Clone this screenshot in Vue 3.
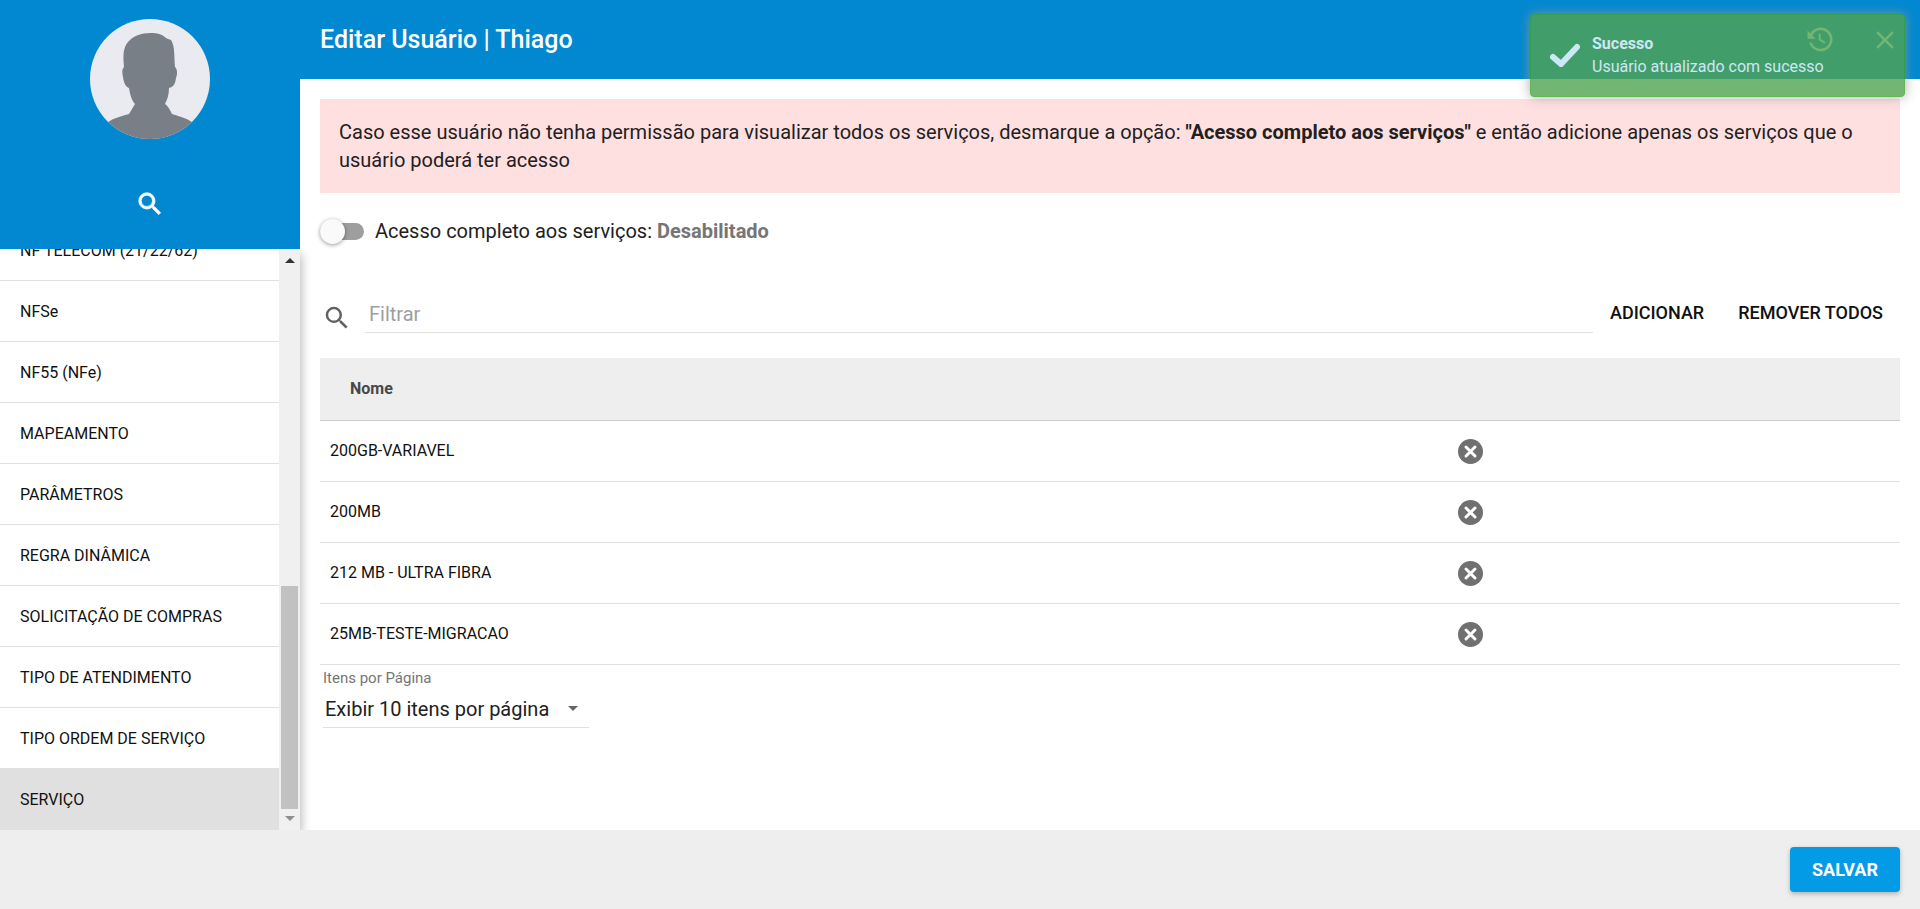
<script setup>
import { ref } from 'vue';

const menuItems = ref([
	'NF TELECOM (21/22/62)',
	'NFSe',
	'NF55 (NFe)',
	'MAPEAMENTO',
	'PARÂMETROS',
	'REGRA DINÂMICA',
	'SOLICITAÇÃO DE COMPRAS',
	'TIPO DE ATENDIMENTO',
	'TIPO ORDEM DE SERVIÇO',
	'SERVIÇO',
]);
const activeItem = ref('SERVIÇO');

const fullAccess = ref(false);
const filter = ref('');
const perPage = ref(10);
const showToast = ref(true);

const services = ref([
	'200GB-VARIAVEL',
	'200MB',
	'212 MB - ULTRA FIBRA',
	'25MB-TESTE-MIGRACAO',
]);

const filteredServices = () => {
	return services.value.filter((service) =>
		service.toLowerCase().includes(filter.value.toLowerCase())
	);
};

const removeService = (name) => {
	services.value = services.value.filter((service) => service !== name);
};
</script>

<template>
	<div class="page">
		<div class="body">
			<aside class="sidebar">
				<div class="profile">
					<svg class="avatar" viewBox="0 0 120 120" role="img" aria-label="Foto do usuário">
						<defs>
							<clipPath id="avatar-clip"><circle cx="60" cy="60" r="60" /></clipPath>
						</defs>
						<g clip-path="url(#avatar-clip)">
							<rect width="120" height="120" fill="#e9ebf0" />
							<path
								fill="#787f87"
								d="M61 14C51 14 43 17 38 23C33 29 33 36 34 48C32 50 32 53 33 58C34 65 36 68 39 69C40 76 42 82 45 85C43 88 41 92 39 95C32 97 24 99 18 103L10 120H110L102 103C96 99 88 97 82 95C80 91 78 87 75 85C77 81 79 76 79 69C83 68 85 66 86 59C88 54 87 50 85 48C84 36 85 27 81 21C79 20 77 20 76 19C72 15 67 14 61 14Z"
							/>
						</g>
					</svg>
					<button class="icon-button" aria-label="Pesquisar">
						<svg class="icon" viewBox="0 0 24 24" fill="#fff" stroke="#fff" stroke-width="0.6">
							<path
								d="M15.5 14h-.79l-.28-.27A6.47 6.47 0 0 0 16 9.5 6.5 6.5 0 1 0 9.5 16c1.61 0 3.09-.59 4.23-1.57l.27.28v.79l5 4.99L20.49 19l-4.99-5zm-6 0C7.01 14 5 11.99 5 9.5S7.01 5 9.5 5 14 7.01 14 9.5 11.99 14 9.5 14z"
							/>
						</svg>
					</button>
				</div>
				<div class="menu">
					<nav class="menu-list">
						<a
							v-for="item in menuItems"
							:key="item"
							href="#"
							class="menu-item"
							:class="{ active: item === activeItem }"
							@click.prevent="activeItem = item"
							>{{ item }}</a
						>
					</nav>
					<div class="scrollbar" aria-hidden="true">
						<svg class="scroll-arrow" viewBox="0 0 21 21"><path fill="#333" d="M6 14l5-5 5 5z" /></svg>
						<div class="scroll-track"><div class="scroll-thumb"></div></div>
						<svg class="scroll-arrow" viewBox="0 0 21 21"><path fill="#8f8f8f" d="M6 7l5 5 5-5z" /></svg>
					</div>
				</div>
			</aside>

			<main class="main">
				<header class="toolbar">
					<h1 class="title">Editar Usuário | Thiago</h1>
					<div class="toolbar-actions">
						<button class="icon-button" aria-label="Histórico">
							<svg class="icon" viewBox="0 0 24 24" fill="#fff">
								<path
									d="M11 7v5.11l4.71 2.79.79-1.28-4-2.37V7M12.5 2C8.97 2 5.91 3.92 4.27 6.77L2 4.5V11h6.5L5.75 8.25C6.96 5.73 9.5 4 12.5 4a7.5 7.5 0 0 1 0 15c-3.27 0-6.03-2.09-7.06-5h-2.1c1.1 4.03 4.77 7 9.16 7 5.24 0 9.5-4.25 9.5-9.5A9.5 9.5 0 0 0 12.5 2z"
								/>
							</svg>
						</button>
						<button class="icon-button" aria-label="Fechar">
							<svg class="icon" viewBox="0 0 24 24" fill="#fff">
								<path
									d="M19 6.41L17.59 5 12 10.59 6.41 5 5 6.41 10.59 12 5 17.59 6.41 19 12 13.41 17.59 19 19 17.59 13.41 12z"
								/>
							</svg>
						</button>
					</div>
				</header>

				<section class="content">
					<p class="alert">
						Caso esse usuário não tenha permissão para visualizar todos os serviços, desmarque a opção:
						<strong>"Acesso completo aos serviços"</strong> e então adicione apenas os serviços que o
						usuário poderá ter acesso
					</p>

					<label class="switch">
						<input v-model="fullAccess" type="checkbox" class="switch-input" />
						<span>
							Acesso completo aos serviços:
							<strong class="switch-state">{{ fullAccess ? 'Habilitado' : 'Desabilitado' }}</strong>
						</span>
					</label>

					<div class="filter-row">
						<svg class="icon filter-icon" viewBox="0 0 24 24" fill="#616161">
							<path
								d="M15.5 14h-.79l-.28-.27A6.47 6.47 0 0 0 16 9.5 6.5 6.5 0 1 0 9.5 16c1.61 0 3.09-.59 4.23-1.57l.27.28v.79l5 4.99L20.49 19l-4.99-5zm-6 0C7.01 14 5 11.99 5 9.5S7.01 5 9.5 5 14 7.01 14 9.5 11.99 14 9.5 14z"
							/>
						</svg>
						<input v-model="filter" type="text" class="filter-input" placeholder="Filtrar" aria-label="Filtrar" />
						<button class="flat-button">ADICIONAR</button>
						<button class="flat-button" @click="services = []">REMOVER TODOS</button>
					</div>

					<table class="table">
						<thead>
							<tr>
								<th class="col-name">Nome</th>
								<th></th>
							</tr>
						</thead>
						<tbody>
							<tr v-for="service in filteredServices()" :key="service">
								<td>{{ service }}</td>
								<td class="cell-action">
									<button class="remove-button" :aria-label="'Remover ' + service" @click="removeService(service)">
										<svg viewBox="0 0 25 25">
											<circle cx="12.5" cy="12.5" r="12.5" fill="#707070" />
											<path d="M8 8l9 9M17 8l-9 9" stroke="#fff" stroke-width="3" stroke-linecap="round" />
										</svg>
									</button>
								</td>
							</tr>
						</tbody>
					</table>

					<div class="pager">
						<label for="per-page" class="pager-label">Itens por Página</label>
						<div class="select-box">
							<select id="per-page" v-model="perPage" class="select">
								<option :value="10">Exibir 10 itens por página</option>
								<option :value="25">Exibir 25 itens por página</option>
								<option :value="50">Exibir 50 itens por página</option>
							</select>
							<svg class="select-arrow" viewBox="0 0 10 5"><path fill="#666" d="M0 0h10L5 5z" /></svg>
						</div>
					</div>
				</section>
			</main>
		</div>

		<footer class="footer">
			<button class="save-button">SALVAR</button>
		</footer>

		<div v-if="showToast" class="toast" role="status" @click="showToast = false">
			<svg class="toast-icon" viewBox="0 0 30 24">
				<path
					d="M3 14l8 7L27 4"
					fill="none"
					stroke="#fff"
					stroke-width="6"
					stroke-linecap="round"
				/>
			</svg>
			<div>
				<div class="toast-title">Sucesso</div>
				<div>Usuário atualizado com sucesso</div>
			</div>
		</div>
	</div>
</template>

<style>
body {
	margin: 0;
	background: #fff;
}
</style>

<style scoped>
.page {
	display: flex;
	flex-direction: column;
	height: 100vh;
	overflow: hidden;
	font-family: Roboto, 'Liberation Sans', sans-serif;
	font-size: 20px;
	line-height: 28px;
	color: #212121;
}

.page * {
	box-sizing: border-box;
}

button {
	font-family: inherit;
	border: 0;
	cursor: pointer;
}

.body {
	flex: 1;
	min-height: 0;
	display: flex;
}

.sidebar {
	width: 300px;
	flex-shrink: 0;
	display: flex;
	flex-direction: column;
}

.profile {
	height: 249px;
	flex-shrink: 0;
	padding-top: 19px;
	background: #0288d1;
	display: flex;
	flex-direction: column;
	align-items: center;
	gap: 50px;
}

.avatar {
	width: 120px;
	height: 120px;
}

.icon-button {
	padding: 0;
	background: none;
	display: flex;
}

.icon {
	width: 30px;
	height: 30px;
}

.menu {
	flex: 1;
	min-height: 0;
	display: flex;
	z-index: 1;
	box-shadow: 1px 5px 10px rgba(0, 0, 0, 0.3);
	clip-path: inset(0 -20px 0 0);
}

.menu-list {
	flex: 1;
	display: flex;
	flex-direction: column;
	justify-content: flex-end;
	overflow: hidden;
	background: #fff;
}

.menu-item {
	height: 61px;
	flex-shrink: 0;
	padding: 0 20px;
	border-bottom: 1px solid #e0e0e0;
	font-size: 16px;
	line-height: 62px;
	color: #111;
	text-decoration: none;
}

.menu-item.active {
	background: #e0e0e0;
}

.scrollbar {
	width: 21px;
	background: #f0f0f0;
	display: flex;
	flex-direction: column;
}

.scroll-arrow {
	width: 21px;
	height: 21px;
}

.scroll-track {
	flex: 1;
	padding: 0 2px;
	display: flex;
	align-items: flex-end;
}

.scroll-thumb {
	width: 100%;
	height: 223px;
	background: #c1c1c1;
}

.main {
	flex: 1;
	min-width: 0;
}

.toolbar {
	height: 79px;
	padding: 0 20px;
	background: #0288d1;
	display: flex;
	align-items: center;
	justify-content: space-between;
}

.title {
	margin: 0;
	font-size: 25px;
	font-weight: 500;
	color: #fff;
}

.toolbar-actions {
	display: flex;
	gap: 35px;
}

.content {
	padding: 20px;
}

.alert {
	margin: 0;
	padding: 19px;
	background: #ffe0e0;
}

.alert strong {
	font-weight: 700;
}

.switch {
	margin-top: 24px;
	display: flex;
	align-items: center;
	gap: 11px;
}

.switch-input {
	appearance: none;
	width: 44px;
	height: 17px;
	margin: 0;
	border-radius: 9px;
	background: #9e9e9e;
	display: flex;
	align-items: center;
}

.switch-input::before {
	content: '';
	width: 25px;
	height: 25px;
	flex-shrink: 0;
	border-radius: 50%;
	background: #fafafa;
	box-shadow: 0 1px 4px rgba(0, 0, 0, 0.4);
}

.switch-input:checked {
	justify-content: flex-end;
	background: #0288d1;
}

.switch-state {
	font-weight: 700;
	color: #757575;
}

.filter-row {
	margin-top: 48px;
	display: flex;
	align-items: center;
}

.filter-icon {
	margin: 10px 13px 0 2px;
	flex-shrink: 0;
}

.filter-input {
	flex: 1;
	min-width: 0;
	height: 40px;
	padding: 2px 4px 0;
	border: 0;
	border-bottom: 1px solid #e0e0e0;
	outline: none;
	background: none;
	font-family: inherit;
	font-size: 20px;
	color: inherit;
}

.filter-input::placeholder {
	color: #9e9e9e;
	opacity: 1;
}

.flat-button {
	padding: 0 17px;
	background: none;
	font-size: 18px;
	font-weight: 500;
	line-height: 40px;
	color: #111;
}

.table {
	width: 100%;
	margin-top: 25px;
	border-collapse: separate;
	border-spacing: 0;
	table-layout: fixed;
	font-size: 16px;
	color: #111;
}

.table th {
	height: 63px;
	padding: 0 30px;
	border-bottom: 1px solid #ccc;
	background: #eee;
	font-weight: 700;
	text-align: left;
	color: #484848;
}

.table .col-name {
	width: 72%;
}

.table td {
	height: 61px;
	padding: 0 10px;
	border-bottom: 1px solid #e0e0e0;
}

.table .cell-action {
	padding: 0;
}

.remove-button {
	width: 25px;
	height: 25px;
	padding: 0;
	background: none;
	display: block;
}

.remove-button svg {
	display: block;
}

.pager {
	width: 266px;
	margin-left: 3px;
}

.pager-label {
	display: block;
	font-size: 15px;
	line-height: 26px;
	color: #757575;
}

.select-box {
	position: relative;
	border-bottom: 1px solid #e0e0e0;
}

.select {
	appearance: none;
	display: block;
	width: 100%;
	height: 36px;
	padding: 0 2px;
	border: 0;
	outline: none;
	background: none;
	font-family: inherit;
	font-size: 20px;
	color: inherit;
}

.select-arrow {
	position: absolute;
	top: 15px;
	right: 11px;
	width: 10px;
	height: 5px;
	pointer-events: none;
}

.footer {
	z-index: 1;
	height: 79px;
	flex-shrink: 0;
	padding: 0 20px;
	background: #eee;
	display: flex;
	align-items: center;
	justify-content: flex-end;
}

.save-button {
	width: 110px;
	height: 45px;
	padding: 0;
	border-radius: 4px;
	background: #039be5;
	box-shadow: 0 2px 5px rgba(0, 0, 0, 0.26);
	font-size: 18px;
	font-weight: 700;
	color: #fff;
}

.toast {
	position: absolute;
	top: 14px;
	right: 15px;
	z-index: 2;
	width: 375px;
	height: 83px;
	padding: 0 19px 2px;
	border: 1px solid #3fa52a;
	border-radius: 4px;
	background: #51a351;
	box-shadow: 0 0 12px #999;
	opacity: 0.8;
	display: flex;
	align-items: center;
	gap: 12px;
	font-size: 16px;
	line-height: 23px;
	color: #fff;
}

.toast-icon {
	width: 30px;
	height: 24px;
}

.toast-title {
	font-weight: 700;
}
</style>
